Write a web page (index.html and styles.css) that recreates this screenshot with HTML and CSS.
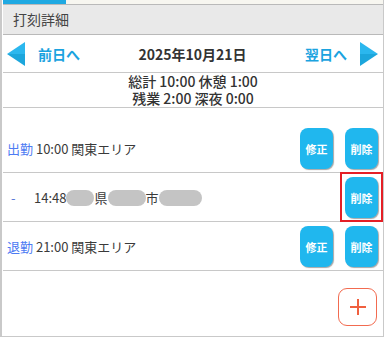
FILE: index.html
```html
<!DOCTYPE html>
<html lang="ja">
<head>
    <meta charset="UTF-8">
    <meta name="viewport" content="width=device-width, initial-scale=1.0">
    <title>打刻詳細</title>
    <link rel="stylesheet" href="styles.css">
</head>
<body>
    <div class="panel">
        <div class="tab-strip"><span class="tab-active"></span></div>
        <div class="title-bar">打刻詳細</div>

        <div class="day-nav">
            <a class="day-link" href="#">
                <svg class="arrow" width="18" height="24" viewBox="0 0 18 24">
                    <polygon points="18,0 0,12 18,12" fill="#2bb7ee"/>
                    <polygon points="0,12 18,12 18,24" fill="#1ca6dc"/>
                </svg>
                <span>前日へ</span>
            </a>
            <div class="day-date">2025年10月21日</div>
            <a class="day-link" href="#">
                <span>翌日へ</span>
                <svg class="arrow" width="18" height="24" viewBox="0 0 18 24">
                    <polygon points="0,0 18,12 0,12" fill="#2bb7ee"/>
                    <polygon points="0,12 18,12 0,24" fill="#1ca6dc"/>
                </svg>
            </a>
        </div>

        <div class="summary">
            <div>総計 10:00 休憩 1:00</div>
            <div>残業 2:00 深夜 0:00</div>
        </div>

        <div class="stamp-row first">
            <div class="stamp-text"><span class="kind">出勤</span> 10:00 関東エリア</div>
            <div class="actions">
                <button class="act-btn">修正</button>
                <button class="act-btn">削除</button>
            </div>
        </div>

        <div class="stamp-row">
            <div class="stamp-text"><span class="dash">-</span>14:48<span class="mask m1"></span>県<span class="mask m2"></span>市<span class="mask m3"></span></div>
            <div class="actions">
                <div class="marked">
                    <button class="act-btn">削除</button>
                </div>
            </div>
        </div>

        <div class="stamp-row">
            <div class="stamp-text"><span class="kind">退勤</span> 21:00 関東エリア</div>
            <div class="actions">
                <button class="act-btn">修正</button>
                <button class="act-btn">削除</button>
            </div>
        </div>

        <div class="footer">
            <button class="add-btn">
                <svg width="18" height="18" viewBox="0 0 18 18">
                    <path d="M9 1 V17 M1 9 H17" stroke="#f0603f" stroke-width="2" fill="none"/>
                </svg>
            </button>
        </div>
    </div>
</body>
</html>
```

FILE: styles.css
```css
body {
    margin: 0;
    font-family: "Noto Sans CJK JP", "Noto Sans", sans-serif;
    color: #3a3a3a;
    background: white;
}

.panel {
    width: 384px;
    height: 337px;
    box-sizing: border-box;
    border-left: 2px solid #c9c9c9;
    border-right: 1px solid #c9c9c9;
    border-bottom: 1px solid #c9c9c9;
    padding-left: 1px;
    overflow: hidden;
}

.tab-strip {
    height: 4px;
    background: #f7f6f0;
}

.tab-active {
    display: block;
    width: 63px;
    height: 4px;
    background: #1fa9e2;
}

.title-bar {
    height: 29px;
    line-height: 29px;
    padding-left: 10px;
    font-size: 14px;
    color: #444;
    background: #e9e9e9;
    border-top: 1px solid #b9b9b9;
    border-bottom: 1px solid #b9b9b9;
}

.day-nav {
    display: flex;
    align-items: center;
    justify-content: space-between;
    height: 37px;
    padding: 0 5px 0 4px;
    border-bottom: 1px solid #c8c8c8;
}

.day-link {
    display: flex;
    align-items: center;
    gap: 13px;
    width: 73px;
    color: #1ba3df;
    font-size: 14px;
    font-weight: bold;
    text-decoration: none;
}

.day-link .arrow {
    flex: none;
}

.day-date {
    font-size: 14px;
    font-weight: bold;
    color: #333;
}

.summary {
    text-align: center;
    font-size: 14px;
    font-weight: 500;
    line-height: 17px;
    color: #333;
    border-bottom: 1px solid #c8c8c8;
}

.stamp-row {
    display: flex;
    align-items: center;
    justify-content: space-between;
    padding: 4px 5px 3px 4px;
    border-bottom: 1px solid #c8c8c8;
}

.stamp-row.first {
    padding-top: 20px;
}

.stamp-text {
    font-size: 13px;
    display: flex;
    align-items: center;
    white-space: pre;
}

.kind {
    color: #4d7bf3;
}

.dash {
    width: 27px;
    padding-left: 4px;
    box-sizing: border-box;
    color: #5a78d8;
}

.mask {
    display: inline-block;
    height: 16px;
    border-radius: 8px;
    background: #c4c4c4;
}

.m1 { width: 28px; }
.m2 { width: 38px; }
.m3 { width: 43px; }

.actions {
    display: flex;
    gap: 12px;
}

.act-btn {
    display: block;
    width: 33px;
    height: 41px;
    padding: 0;
    border: none;
    border-radius: 8px;
    background: #20b7ee;
    color: white;
    font-family: inherit;
    font-size: 11px;
    font-weight: bold;
    box-shadow: 1px 1px 1px rgba(0, 0, 0, 0.35);
}

.marked {
    border: 2px solid #e41f26;
    padding: 3px 3px 2px 3px;
    margin: -5px -5px -4px -5px;
}

.footer {
    display: flex;
    justify-content: flex-end;
    padding: 17px 6px 0 0;
}

.add-btn {
    width: 39px;
    height: 38px;
    padding: 0;
    display: flex;
    align-items: center;
    justify-content: center;
    background: white;
    border: 1.5px solid #f26b50;
    border-radius: 9px;
}
```
